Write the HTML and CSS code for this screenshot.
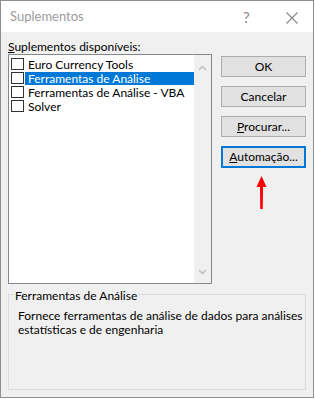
FILE: index.html
```html
<!DOCTYPE html>
<html lang="pt">
<head>
<meta charset="utf-8">
<link rel="stylesheet" href="styles.css">
</head>
<body>
<div class="dialog">
  <div class="titlebar">
    <span class="title">Suplementos</span>
    <span class="help">?</span>
    <svg class="close" width="12" height="12" viewBox="0 0 12 12"><path d="M0.5 0.5 L11.5 11.5 M11.5 0.5 L0.5 11.5" stroke="#8a8a8a" stroke-width="1.2" fill="none"/></svg>
  </div>
  <div class="content">
    <div class="main">
      <div class="left">
        <div class="label"><u>S</u>uplementos disponíveis:</div>
        <div class="listbox">
          <ul class="items">
            <li class="item"><span class="check"></span><span class="text">Euro Currency Tools</span></li>
            <li class="item selected"><span class="check"></span><span class="text">Ferramentas de Análise</span></li>
            <li class="item"><span class="check"></span><span class="text">Ferramentas de Análise - VBA</span></li>
            <li class="item"><span class="check"></span><span class="text">Solver</span></li>
          </ul>
          <div class="scrollbar">
            <svg width="9" height="6" viewBox="0 0 9 6"><path d="M1 5 L4.5 1.5 L8 5" stroke="#c2c2c2" stroke-width="1.6" fill="none"/></svg>
            <svg width="9" height="6" viewBox="0 0 9 6"><path d="M1 1 L4.5 4.5 L8 1" stroke="#c2c2c2" stroke-width="1.6" fill="none"/></svg>
          </div>
        </div>
      </div>
      <div class="buttons">
        <button class="btn">OK</button>
        <button class="btn">Cancelar</button>
        <button class="btn"><u>P</u>rocurar...</button>
        <button class="btn focused"><u>A</u>utomação...</button>
      </div>
    </div>
    <fieldset class="group">
      <legend>Ferramentas de Análise</legend>
      <p class="desc">Fornece ferramentas de análise de dados para análises estatísticas e de engenharia</p>
    </fieldset>
  </div>
  <svg class="arrow" width="11" height="34" viewBox="0 0 11 34"><path d="M5.5 0 L10.5 11 L7 11 L6.8 33 L4.2 33 L4 11 L0.5 11 Z" fill="#ff0000"/></svg>
</div>
</body>
</html>
```
FILE: styles.css
```css
* { box-sizing: border-box; }
html, body { margin: 0; padding: 0; }
body {
  width: 315px;
  height: 399px;
  background: #ffffff;
  font-family: Lato, "Noto Sans", sans-serif;
  font-size: 12px;
  color: #000;
  overflow: hidden;
}
.dialog {
  position: relative;
  width: 314px;
  height: 398px;
  border: 1px solid #8e8e8e;
  background: #f0f0f0;
  display: flex;
  flex-direction: column;
}
.titlebar {
  height: 31px;
  background: #fff;
  display: flex;
  align-items: center;
  position: relative;
}
.title {
  margin-left: 9px;
  font-size: 13px;
  color: #9b9b9b;
  margin-top: -2px;
}
.help {
  position: absolute;
  left: 242px;
  top: 7px;
  font-size: 15px;
  color: #8a8a8a;
}
.close {
  position: absolute;
  left: 285px;
  top: 11px;
}
.content {
  padding: 7px 7px 0 7px;
  display: flex;
  flex-direction: column;
}
.main {
  display: flex;
  gap: 9px;
}
.left {
  width: 205px;
  display: flex;
  flex-direction: column;
}
.label {
  height: 15px;
  line-height: 15px;
}
.listbox {
  height: 230px;
  border: 1px solid #828790;
  background: #fff;
  display: flex;
}
.items {
  list-style: none;
  margin: 0;
  padding: 2px 0 0 2px;
  flex: 1;
}
.item {
  height: 14px;
  display: flex;
  align-items: center;
}
.check {
  width: 13px;
  height: 12px;
  border: 1px solid #333;
  background: #fff;
  flex: none;
}
.text {
  margin-left: 1px;
  padding-left: 3px;
  height: 13px;
  line-height: 13px;
  flex: 1;
  overflow: hidden;
}
.selected .text {
  background: #0078d7;
  color: #fff;
}
.scrollbar {
  width: 17px;
  background: #f0f0f0;
  display: flex;
  flex-direction: column;
  justify-content: space-between;
  align-items: center;
  padding: 10px 0 8px;
}
.buttons {
  display: flex;
  flex-direction: column;
  gap: 9px;
  padding-top: 17px;
}
.btn {
  width: 85px;
  height: 21px;
  background: #e1e1e1;
  border: 1px solid #adadad;
  font-family: inherit;
  font-size: 12px;
  color: #000;
  padding: 0;
  line-height: 18px;
}
.focused {
  border: 2px solid #0078d7;
  height: 22px;
}
.group {
  margin: 1px 0 0 0;
  width: 298px;
  height: 105px;
  border: 1px solid #dcdcdc;
  padding: 0 0 0 8px;
}
.group legend {
  padding: 4px 1px 0;
  margin-left: -3px;
  line-height: 14px;
}
.desc {
  margin: 6px 0 0 1px;
  line-height: 14px;
}
.arrow {
  position: absolute;
  left: 255px;
  top: 175px;
}
```
